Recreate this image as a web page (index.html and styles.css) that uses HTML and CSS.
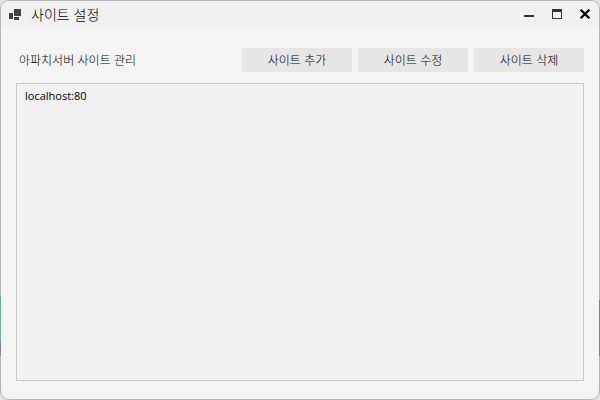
FILE: index.html
```
<!DOCTYPE html>
<html lang="ko">
<head>
    <meta charset="UTF-8">
    <meta name="viewport" content="width=device-width, initial-scale=1.0">
    <title>사이트 설정</title>
    <link rel="stylesheet" href="styles.css">
</head>
<body>
    <div class="window">
        <header class="titlebar">
            <svg class="app-icon" width="12" height="12" viewBox="0 0 12 12" shape-rendering="crispEdges" aria-hidden="true">
                <path d="M0 5h4v6H0zM5 1h7v7H5zM5 9h5v3H5z" fill="#424242"/>
            </svg>
            <h1>사이트 설정</h1>
            <div class="window-controls">
                <button type="button" aria-label="최소화">
                    <svg width="12" height="12" viewBox="0 0 12 12" shape-rendering="crispEdges">
                        <path d="M1 7h10v2H1z" fill="#333"/>
                    </svg>
                </button>
                <button type="button" aria-label="최대화">
                    <svg width="12" height="12" viewBox="0 0 12 12" shape-rendering="crispEdges">
                        <path d="M1 1h10v10H1zM2 4v6h8V4z" fill="#333" fill-rule="evenodd"/>
                    </svg>
                </button>
                <button type="button" aria-label="닫기">
                    <svg width="12" height="12" viewBox="0 0 12 12">
                        <path d="M1.7 1.7l8.6 8.6M10.3 1.7l-8.6 8.6" stroke="#000" stroke-width="2.3"/>
                    </svg>
                </button>
            </div>
        </header>
        <main class="content">
            <div class="toolbar">
                <h2 id="site-list-label">아파치서버 사이트 관리</h2>
                <div class="actions">
                    <button type="button">사이트 추가</button>
                    <button type="button">사이트 수정</button>
                    <button type="button">사이트 삭제</button>
                </div>
            </div>
            <ul class="site-list" aria-labelledby="site-list-label">
                <li>localhost:80</li>
            </ul>
        </main>
    </div>
</body>
</html>
```
FILE: styles.css
```
* {
    box-sizing: border-box;
}
body {
    margin: 0;
    background-color: #e4e4e4;
    color: #000;
    font-family: "Noto Sans CJK KR", sans-serif;
    font-size: 12px;
    font-weight: 300;
    line-height: 16px;
}
h1, h2, ul {
    margin: 0;
    padding: 0;
    font-weight: inherit;
}
button {
    border: none;
    padding: 0;
    color: inherit;
    font: inherit;
}
.window {
    display: flex;
    flex-direction: column;
    min-height: 100vh;
    border: 1px solid transparent;
    border-radius: 9px;
    overflow: hidden;
    background:
        linear-gradient(#f4f4f4, #f4f4f4) padding-box,
        linear-gradient(#b4b4b4 74%, #5fc078 74%, #70b0a8 85%, #8080b8 86%, #8080b8 89%, #b4b4b4 89%) left / 1px 100% no-repeat border-box,
        linear-gradient(#b4b4b4 75%, #b86c78 75%, #b86c78 89%, #b4b4b4 89%) right / 1px 100% no-repeat border-box,
        linear-gradient(#b4b4b4, #b4b4b4) border-box;
}
.titlebar {
    display: flex;
    align-items: center;
    height: 28px;
    padding: 0 8px 2px;
    background-color: #f1f1f1;
}
.app-icon {
    margin-right: 10px;
}
h1 {
    font-size: 14px;
}
.window-controls {
    display: flex;
    gap: 16px;
    margin-left: auto;
}
.window-controls button {
    display: flex;
    background: none;
}
.content {
    display: flex;
    flex: 1;
    flex-direction: column;
    gap: 11px;
    padding: 19px 15px 18px;
}
.toolbar {
    display: flex;
    align-items: center;
    justify-content: space-between;
    padding-left: 3px;
}
h2 {
    font-size: 12px;
}
.actions {
    display: flex;
    gap: 6px;
}
.actions button {
    width: 110px;
    height: 24px;
    background-color: #e6e6e6;
}
.site-list {
    flex: 1;
    padding: 4px 8px;
    border: 1px solid #c8c8c8;
    background-color: #f1f1f1;
    font-family: "Open Sans", "Noto Sans CJK KR", sans-serif;
    font-size: 11px;
    font-weight: 400;
    list-style: none;
}
```
